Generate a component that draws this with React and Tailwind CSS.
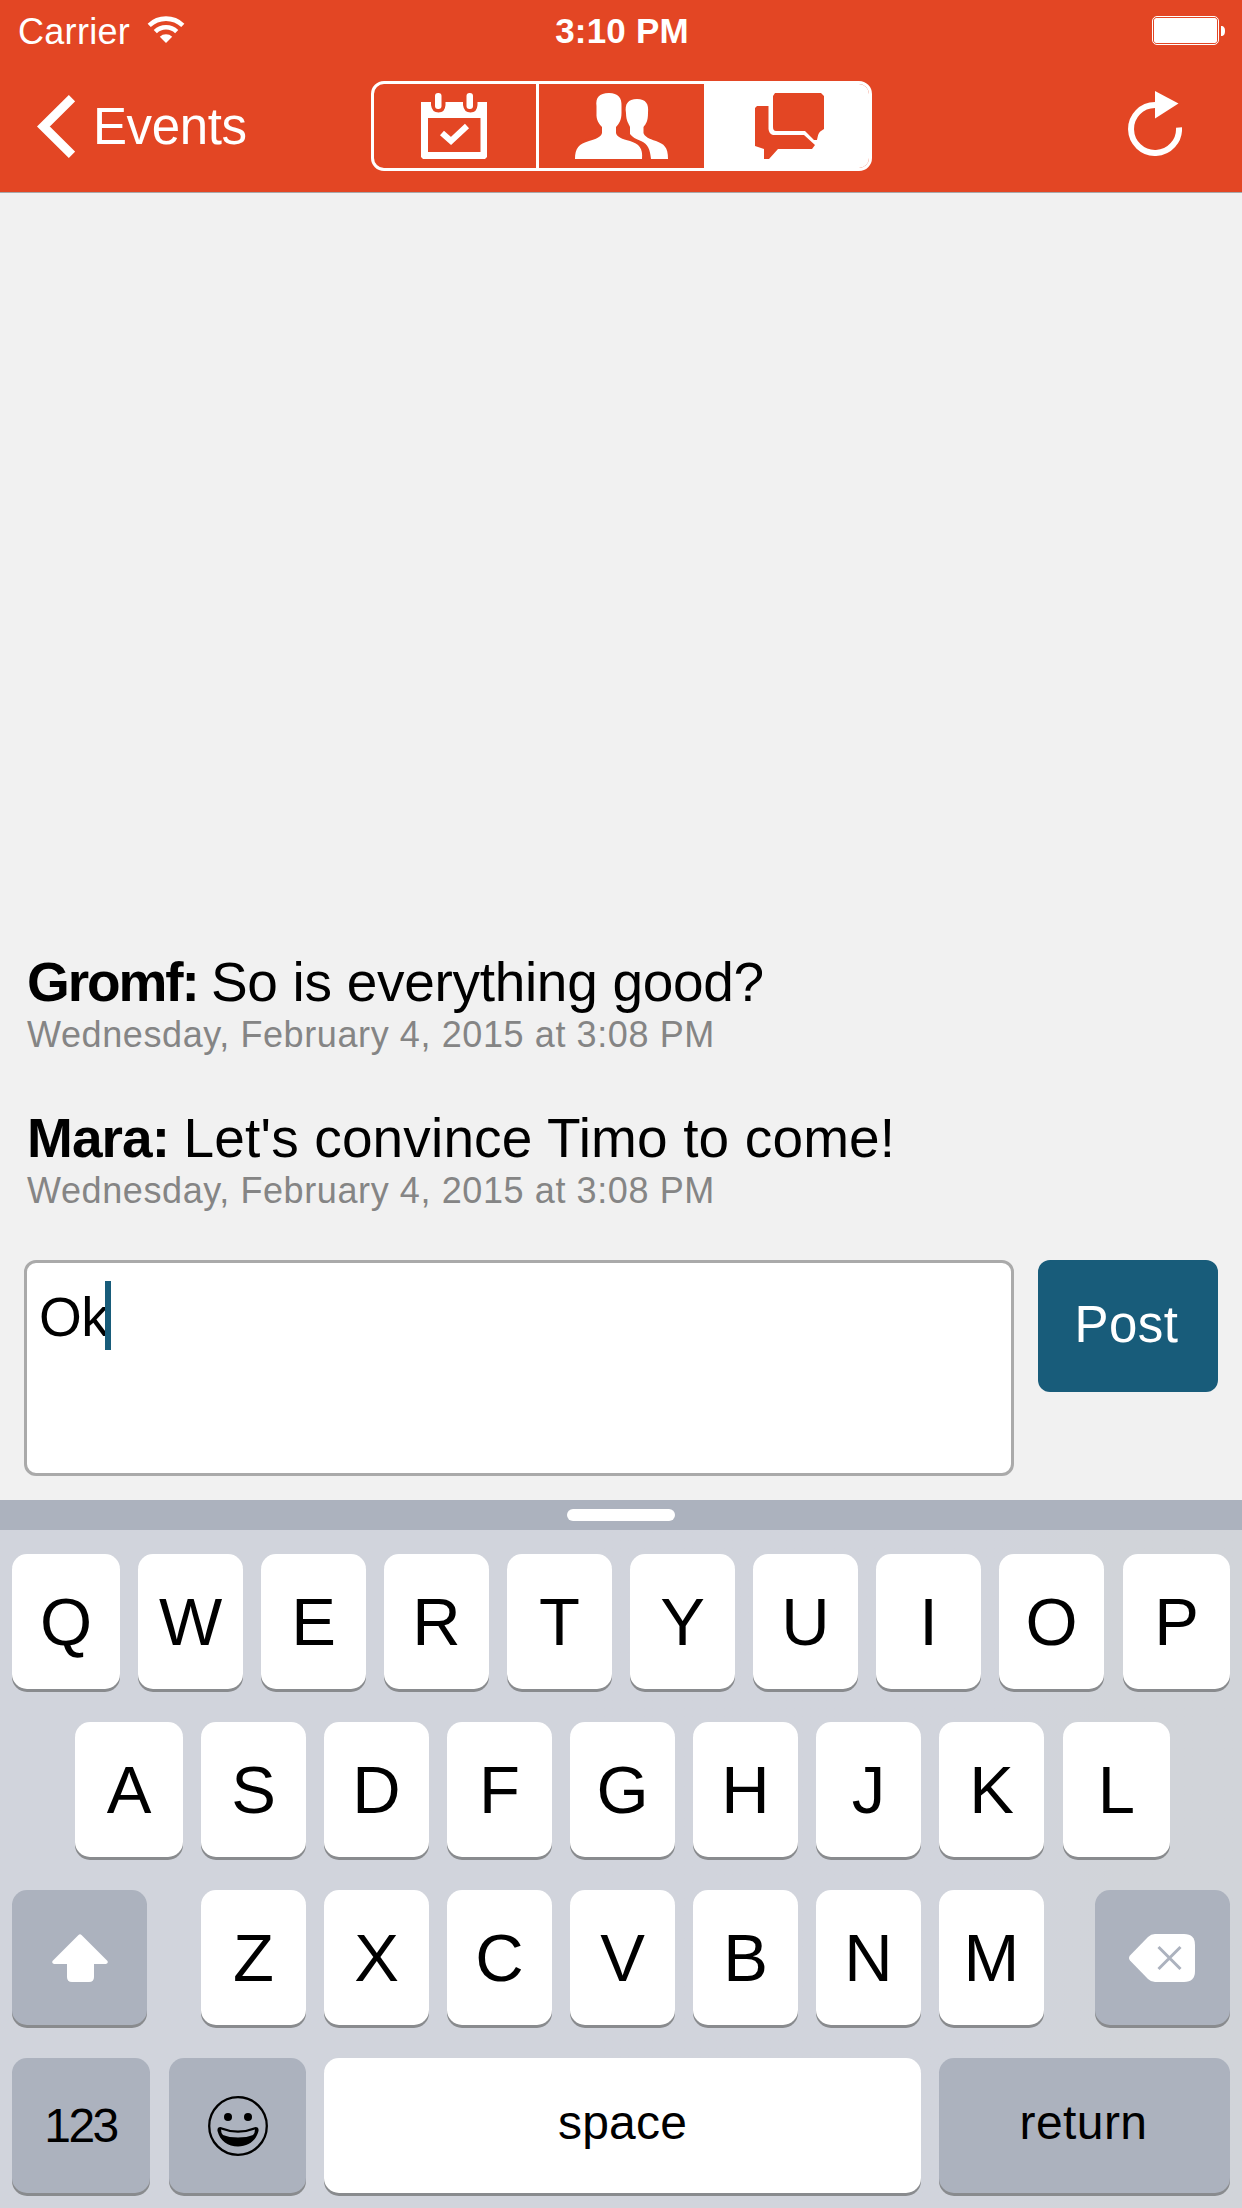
const Key = ({ children, className = "" }) => (
  <div className={`flex h-[135px] items-center justify-center rounded-[15px] shadow-[0_3px_0_#898b8e] ${className}`}>
    {children}
  </div>
);

const Letter = ({ c, first, last }) => (
  <Key className={first ? "w-[108px] bg-white" : last ? "ml-px w-[107px] bg-white" : "w-[105px] bg-white"}>
    <span className="text-[67px] leading-none text-black">{c}</span>
  </Key>
);

const Message = ({ name, text, nameClass, textClass }) => (
  <div className="h-[156px] pl-[27px] pt-[4px]">
    <div className="flex h-[60px] whitespace-pre text-[55px] leading-[60px] text-black">
      <span className={`font-bold ${nameClass}`}>{name}: </span>
      <span className={textClass}>{text}</span>
    </div>
    <div className="whitespace-nowrap pt-px text-[36px] leading-[44px] tracking-[0.6px] text-[#858585]">
      Wednesday, February 4, 2015 at 3:08 PM
    </div>
  </div>
);

const Wifi = () => (
  <svg width="38" height="28" viewBox="0 0 38 28" fill="none" stroke="white" strokeWidth="4.6">
    <path d="M2.2 9.3A24.5 24.5 0 0 1 35.8 9.3" />
    <path d="M8.3 15.6A15.5 15.5 0 0 1 29.7 15.6" />
    <path d="M19 27L12.8 20.8A9 9 0 0 1 25.2 20.8Z" fill="white" stroke="none" />
  </svg>
);

const Calendar = () => (
  <svg width="66" height="66" viewBox="0 0 66 66">
    <path fill="white" fillRule="evenodd" d="M0 9H10V12Q11 19.500 17.500 19.500T24.500 12V9H42V12Q43 19.500 49.500 19.500T56.500 12V9H66V64L64 66H2L0 64ZM7 25V59H59.500V25Z" />
    <rect x="14" y="0" width="6.500" height="16" rx="3" fill="white" />
    <rect x="45.500" y="0" width="6.500" height="16" rx="3" fill="white" />
    <path d="M21 40L30 48L46 33" fill="none" stroke="white" strokeWidth="6" />
  </svg>
);

const People = () => (
  <svg width="93" height="66" viewBox="0 0 93 66" fill="white">
    <path d="M62 6C53 6 49.500 11 51 20C51 28 54 31 55 34V41C57 44 61 46 66 48C73 51 75 56 76 66H93C93 54 89 51 81 48C74 46 69 43 68.500 40V34C71 31 73 28 73 20C74 11 71 6 62 6Z" />
    <path stroke="#e34624" strokeWidth="4" paintOrder="stroke" d="M34 0C24 0 20.500 5 21.500 13V20C21 27 24 31 27 34V40C26 44 21 46 14 48C4 51 0 55 0 66H67C68 55 64 51 55 48C47 46 42 44 41 40V34C44 31 46.500 27 46.500 20V13C47 5 43 0 34 0Z" />
  </svg>
);

const Chat = () => (
  <svg width="69" height="66" viewBox="0 0 69 66" fill="#e34624">
    <path d="M20 0H66L69 3V36L66 38C63 40 63 43 62 47L59 47L50 38H21Q18 38 18 34V3Z" />
    <path d="M2 13H13.500V36Q14 41 18 42H49L60 52L57 56H23L14 66H9V56L0 53V15Z" />
  </svg>
);

export default function App() {
  return (
    <div className="flex h-[2208px] w-[1242px] flex-col overflow-hidden bg-[#f1f1f1] font-['Liberation_Sans',Arial,sans-serif]">
      <header className="h-[193px] shrink-0 border-b border-[#a8a8aa] bg-[#e34624] text-white">
        <div className="flex h-[60px] items-center pl-[18px] pr-[17px]">
          <div className="flex w-[501px] items-center">
            <span className="w-[114px] whitespace-nowrap pt-[3px] text-[36px] leading-none tracking-[0.3px]">Carrier</span>
            <div className="ml-[14.500px]"><Wifi /></div>
          </div>
          <div className="flex w-[206px] justify-center whitespace-nowrap pt-px text-[35px] font-bold leading-none tracking-[0.2px]">3:10 PM</div>
          <div className="ml-auto">
            <svg width="73" height="29" viewBox="0 0 73 29" fill="white">
              <rect x="0.500" y="0.500" width="66" height="28" rx="4.500" fill="none" stroke="white" strokeWidth="1" />
              <rect x="2" y="2" width="63" height="25" rx="2.500" />
              <path d="M69 10C72 10 73 12 73 15S72 20 69 20Z" />
            </svg>
          </div>
        </div>
        <div className="flex h-[132px] items-start">
          <div className="flex w-[371px] items-center pl-[37px] pt-[35px]">
            <svg width="38" height="63" viewBox="0 0 38 63" fill="none" stroke="white" strokeWidth="9">
              <path d="M35 3.200L6.400 31.500L35 59.800" />
            </svg>
            <span className="ml-[18px] whitespace-nowrap text-[51px] leading-[63px] tracking-[-0.400px]">Events</span>
          </div>
          <div className="mt-[21px] flex h-[90px] w-[501px] overflow-hidden rounded-[13px] border-[3px] border-white">
            <div className="flex w-[165px] border-r-[3px] border-white pl-[47px] pt-[9px]">
              <Calendar />
            </div>
            <div className="flex w-[165px] justify-center pt-[9px]"><People /></div>
            <div className="flex grow bg-white pl-[51px] pt-[9px]"><Chat /></div>
          </div>
          <svg className="ml-auto mr-[60px] mt-[31px]" width="54" height="65" viewBox="0 0 54 65">
            <path d="M27 14A24 24 0 1 0 51 36.500" fill="none" stroke="white" strokeWidth="6" />
            <path d="M27 0L50.500 12.500L27 27.500Z" fill="white" />
          </svg>
        </div>
      </header>

      <main className="flex h-[1307px] shrink-0 flex-col justify-end">
        <Message name="Gromf" text="So is everything good?" nameClass="tracking-[-2.100px]" textClass="tracking-[-0.300px]" />
        <Message name="Mara" text="Let's convince Timo to come!" nameClass="tracking-[-0.900px]" textClass="tracking-[0.150px]" />
        <div className="flex items-start gap-[24px] pb-[24px] pl-[24px]">
          <div className="flex h-[216px] w-[990px] rounded-[12px] border-[3px] border-[#aaaaaa] bg-white pl-[12px] pt-[18px]">
            <span className="text-[55px] leading-[73px] tracking-[-0.500px] text-black">Ok</span>
            <span className="-ml-[3px] h-[69px] w-[6px] bg-[#185c7a]" />
          </div>
          <div className="flex h-[132px] w-[180px] items-center justify-center rounded-[12px] bg-[#185c7a] pb-[4px] pr-[3px] text-[51px] leading-none tracking-[0.5px] text-white">
            Post
          </div>
        </div>
      </main>

      <div className="flex h-[30px] shrink-0 items-center justify-center bg-[#acb2be]">
        <div className="h-[12px] w-[108px] rounded-full bg-white" />
      </div>
      <section className="flex grow flex-col gap-[33px] bg-linear-to-r from-[#d1d4dc] from-80% to-[#d1d4d9] to-90% px-[12px] pt-[24px]">
        <div className="flex gap-[18px]">
          {[..."QWERTYUIOP"].map((c) => <Letter key={c} c={c} first={c === "Q"} last={c === "P"} />)}
        </div>
        <div className="flex gap-[18px] pl-[63px]">
          {[..."ASDFGHJKL"].map((c) => <Letter key={c} c={c} first={c === "A"} last={c === "L"} />)}
        </div>
        <div className="flex">
          <Key className="w-[135px] bg-[#acb2be]">
            <svg width="56" height="48" viewBox="0 0 56 48" fill="white">
              <path d="M26.500 1Q28 -0.500 29.500 1L55.500 27Q56.500 29.500 54 30H42V43Q42 48 37 48H20Q15 48 15 43V30H2Q-0.500 29.500 0.500 27Z" />
            </svg>
          </Key>
          <div className="ml-[54px] flex gap-[18px]">
            {[..."ZXCVBNM"].map((c) => <Letter key={c} c={c} />)}
          </div>
          <Key className="ml-[51px] w-[135px] bg-[#acb2be] pr-[2px]">
            <svg width="66" height="48" viewBox="0 0 66 48">
              <path d="M19 3Q22 0 26 0H55Q66 0 66 11V37Q66 48 55 48H26Q22 48 19 45L1 26.500Q-1 24 1 21.500Z" fill="white" />
              <path d="M29.500 13L51.500 35M51.500 13L29.500 35" stroke="#acb2be" strokeWidth="3" />
            </svg>
          </Key>
        </div>
        <div className="flex">
          <Key className="w-[138px] bg-[#acb2be] pr-[1px] text-[48px] tracking-[-2.500px] text-black">123</Key>
          <Key className="ml-[19px] w-[137px] bg-[#acb2be]">
            <svg width="60" height="60" viewBox="0 0 60 60">
              <circle cx="30" cy="30" r="28.800" fill="none" stroke="black" strokeWidth="2.300" />
              <circle cx="20" cy="21" r="4" />
              <circle cx="40" cy="21" r="4" />
              <path fillRule="evenodd" d="M12.500 31Q30 38 47.500 31Q51 31 50.500 35C48 45 40 50.500 30 50.500S12 45 9.500 35Q9 31 12.500 31ZM13 33.500Q13 37 15 39Q21 41.500 30 41.500T45 39Q47 37 47 33.500Q30 40 13 33.500Z" />
            </svg>
          </Key>
          <Key className="ml-[18px] w-[597px] bg-white pb-[6px] text-[48px] tracking-[0.200px] text-black">space</Key>
          <Key className="ml-[18px] w-[291px] bg-[#acb2be] pb-[6px] pr-[2px] text-[48px] tracking-[0.400px] text-black">return</Key>
        </div>
      </section>
    </div>
  );
}
